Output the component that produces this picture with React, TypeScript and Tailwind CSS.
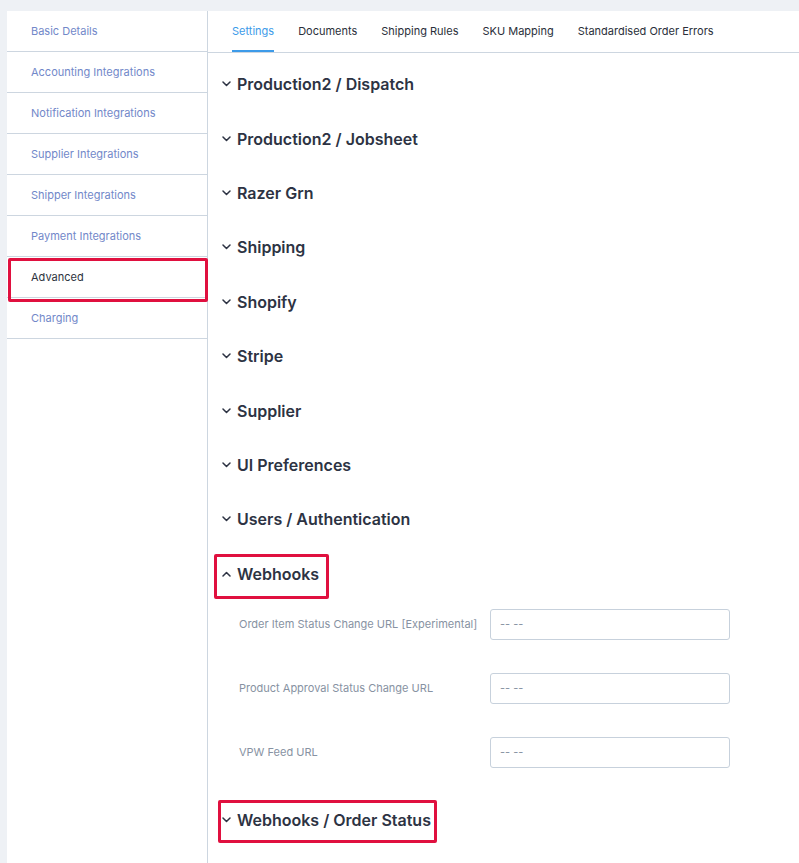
import React from 'react'

const sideItems = [
  'Basic Details',
  'Accounting Integrations',
  'Notification Integrations',
  'Supplier Integrations',
  'Shipper Integrations',
  'Payment Integrations',
  'Advanced',
  'Charging',
]

const tabs = ['Settings', 'Documents', 'Shipping Rules', 'SKU Mapping', 'Standardised Order Errors']

const sections = [
  'Production2 / Dispatch',
  'Production2 / Jobsheet',
  'Razer Grn',
  'Shipping',
  'Shopify',
  'Stripe',
  'Supplier',
  'UI Preferences',
  'Users / Authentication',
]

const webhookFields = [
  'Order Item Status Change URL [Experimental]',
  'Product Approval Status Change URL',
  'VPW Feed URL',
]

function Chevron({ up = false }: { up?: boolean }) {
  return (
    <svg width="9" height="6" viewBox="0 0 9 6" fill="none" className="shrink-0">
      <path
        d={up ? 'M1 5 L4.5 1.5 L8 5' : 'M1 1 L4.5 4.5 L8 1'}
        stroke="#2d3343"
        strokeWidth="1.5"
        strokeLinecap="round"
        strokeLinejoin="round"
      />
    </svg>
  )
}

function SectionHeader({ title, up, box }: { title: string; up?: boolean; box?: string }) {
  return (
    <div className="relative flex h-[54.4px] items-center gap-[6px] pl-[14px]">
      {box && <div className={box} />}
      <Chevron up={up} />
      <span className="text-[16px] font-semibold text-[#2d3343]">{title}</span>
    </div>
  )
}

export default function App() {
  return (
    <div
      className="flex min-h-[863px] bg-[#eef1f5] pt-[11px] pl-[7px]"
      style={{ fontFamily: 'Inter, "Noto Sans", sans-serif' }}
    >
      {/* sidebar */}
      <aside className="w-[200px] shrink-0 bg-white">
        {sideItems.map((item) => {
          const active = item === 'Advanced'
          return (
            <div
              key={item}
              className="relative flex h-[41px] items-center border-b border-[#cdd6e0] pl-[24px]"
            >
              {active && (
                <div className="absolute left-[1px] top-[1px] h-[44px] w-[200px] rounded-[2px] border-[3px] border-[#e0103f]" />
              )}
              <span className={`text-[11px] ${active ? 'text-[#2d3340]' : 'text-[#7288c9]'}`}>{item}</span>
            </div>
          )
        })}
      </aside>

      {/* main */}
      <main className="flex-1 border-l border-[#cdd6e0] bg-white">
        <nav className="flex h-[42px] items-stretch border-b border-[#cdd6e0] pl-[12px]">
          {tabs.map((t, i) => (
            <div
              key={t}
              className={`mx-[12px] flex items-center text-[11px] ${
                i === 0 ? 'border-b-2 border-[#3d9be9] pt-[2px] text-[#3d9be9]' : 'text-[#2a2f3a]'
              }`}
            >
              {t}
            </div>
          ))}
        </nav>

        <div className="pt-[4px]">
          {sections.map((s) => (
            <SectionHeader key={s} title={s} />
          ))}
          <SectionHeader
            title="Webhooks"
            up
            box="absolute left-[6px] top-[7px] h-[45px] w-[115px] rounded-[2px] border-[3px] border-[#e0103f]"
          />

          <div className="flex flex-col gap-[33px] pt-[8px]">
            {webhookFields.map((f) => (
              <div key={f} className="flex items-center pl-[31px]">
                <span className="w-[251px] text-[11px] text-[#8792a2]">{f}</span>
                <div className="flex h-[31px] w-[240px] items-center rounded-[3px] border border-[#c7d1dc] pl-[9px] text-[11px] text-[#8792a2]">
                  -- --
                </div>
              </div>
            ))}
          </div>

          <div className="pt-[25px]">
            <SectionHeader
              title="Webhooks / Order Status"
              box="absolute left-[10px] top-[7px] h-[43px] w-[219px] rounded-[2px] border-[3px] border-[#e0103f]"
            />
          </div>
        </div>
      </main>
    </div>
  )
}
